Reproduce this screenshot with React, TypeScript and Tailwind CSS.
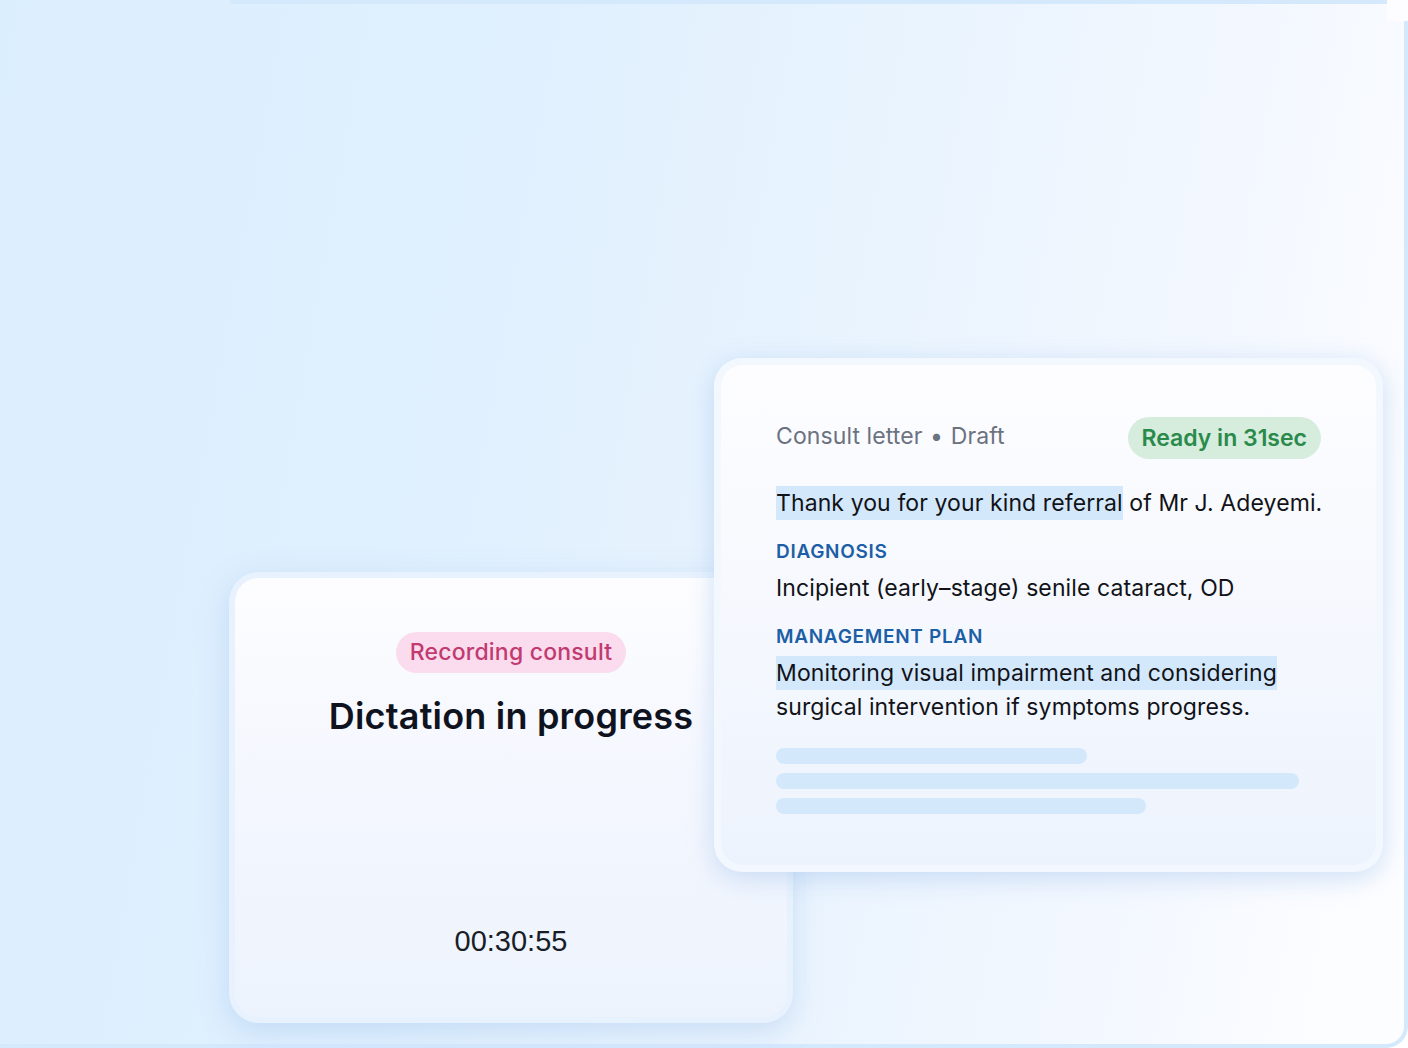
import React from "react";

const font = { fontFamily: "Inter, 'Noto Sans', sans-serif" };

function SkeletonBar({ width }: { width: string }) {
  return <div className={`h-4 rounded-full bg-[#d4e8fc] ${width}`} />;
}

function RecordingCard() {
  return (
    <div className="mt-[214px] w-[564px] h-[451px] shrink-0 rounded-[30px] bg-[#e8f2fe] p-[6px] shadow-[0_8px_28px_rgba(140,180,230,0.35)]">
      <div className="flex h-full flex-col items-center rounded-[24px] bg-[linear-gradient(180deg,#fdfdff_0%,#f4f7fe_45%,#edf3fd_100%)] pt-[54px]">
        <span className="rounded-full bg-[#fadcee] px-[14px] text-[23px] font-medium leading-[41px] tracking-[0.2px] text-[#c23a6f]">
          Recording consult
        </span>
        <h1 className="mt-[23px] text-[36px] font-semibold leading-[40px] tracking-[0.2px] text-[#0f1320]">
          Dictation in progress
        </h1>
        <div
          className="mt-[190px] text-[29px] leading-[30px] text-[#1a1d26]"
          style={{ fontFamily: "'Liberation Sans', Arial, sans-serif" }}
        >
          00:30:55
        </div>
      </div>
    </div>
  );
}

function LetterCard() {
  return (
    <div className="relative z-10 ml-[-79px] w-[669px] h-[514px] shrink-0 rounded-[28px] bg-[#f3f8fe] p-[7px] shadow-[0_6px_26px_rgba(140,180,230,0.4)]">
      <div className="h-full rounded-[22px] bg-[linear-gradient(180deg,#fdfdff_0%,#f7f9fe_40%,#edf3fd_100%)] pl-[55px] pr-[55px] pt-[52px]">
        <div className="flex items-center justify-between">
          <span className="-translate-y-[2px] text-[23px] leading-[40px] tracking-[0.1px] text-[#6b7280]">
            Consult letter <span className="mx-[1px]">•</span> Draft
          </span>
          <span className="rounded-full bg-[#d6ecdd] px-[14px] text-[23px] font-semibold leading-[42px] text-[#2a8a4b]">
            Ready in 31sec
          </span>
        </div>

        <div className="whitespace-nowrap tracking-[0.1px] text-[#111318]">
          <p className="mt-[27px] text-[23px] leading-[34px]">
            <span className="inline-block bg-[#d4e8fc]">Thank you for your kind referral</span> of Mr J. Adeyemi.
          </p>

          <div className="mt-[21px] text-[19px] font-semibold leading-[22px] tracking-[0.7px] text-[#1d5fa6]">DIAGNOSIS</div>
          <p className="mt-[8px] text-[23px] leading-[34px]">Incipient (early–stage) senile cataract, OD</p>

          <div className="mt-[21px] text-[19px] font-semibold leading-[22px] tracking-[0.7px] text-[#1d5fa6]">
            MANAGEMENT PLAN
          </div>
          <p className="mt-[8px] text-[23px] leading-[34px]">
            <span className="inline-block bg-[#d4e8fc]">Monitoring visual impairment and considering</span>
            <br />
            surgical intervention if symptoms progress.
          </p>
        </div>

        <div className="mt-[24px] flex flex-col gap-[9px]">
          <SkeletonBar width="w-[311px]" />
          <SkeletonBar width="w-[523px]" />
          <SkeletonBar width="w-[370px]" />
        </div>
      </div>
    </div>
  );
}

export default function App() {
  return (
    <div className="relative h-[1048px] w-[1408px] overflow-hidden bg-white" style={font}>
      <div className="h-full w-full rounded-br-[22px] border-b-4 border-r-4 border-[#d5e9fd] bg-[linear-gradient(100deg,#dbeefe_0%,#e0f0fe_35%,#eaf4fe_60%,#f4f8ff_82%,#fcfdff_96%)]">
        <div className="ml-[230px] h-1 w-[1157px] bg-[#d5e9fd]" />
        <div className="flex items-start pl-[229px] pt-[354px]">
          <RecordingCard />
          <LetterCard />
        </div>
      </div>
      {/* gap at the top of the right edge */}
      <div className="absolute right-0 top-0 h-[21px] w-[21px] bg-[#fdfdff]" />
    </div>
  );
}
